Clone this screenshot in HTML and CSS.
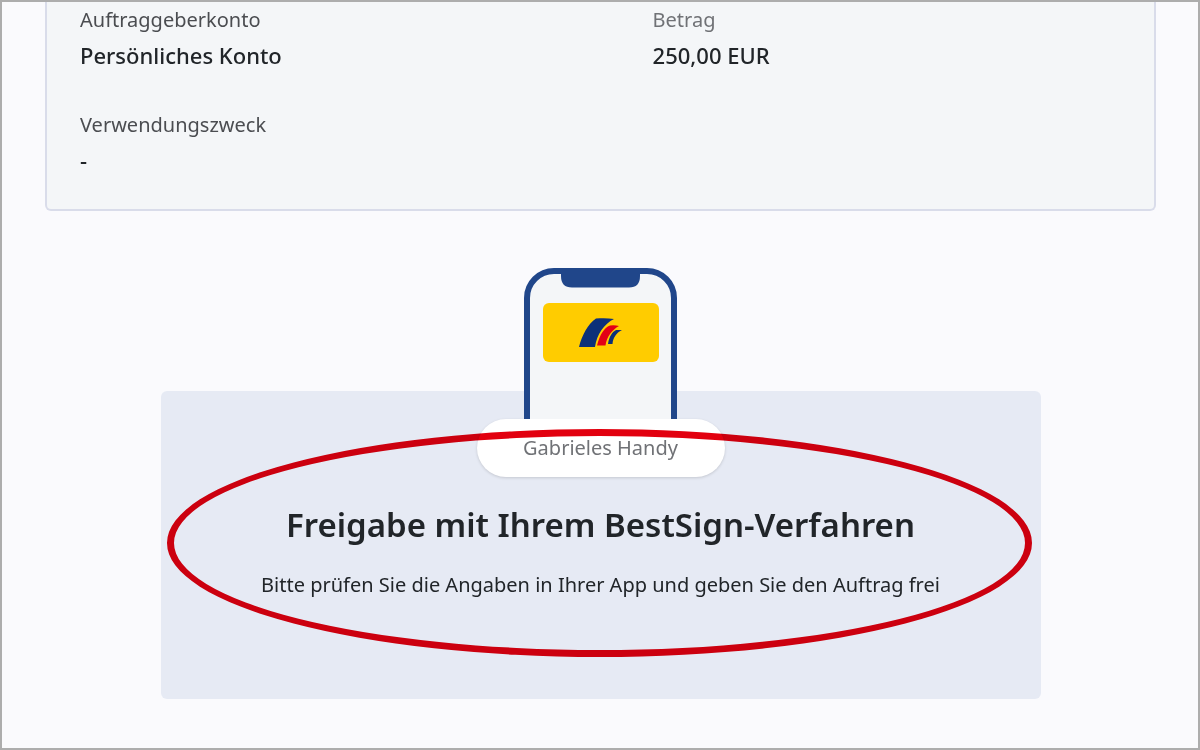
FILE: index.html
```
<!DOCTYPE html>
<html lang="de">
<head>
  <meta charset="UTF-8">
  <meta name="viewport" content="width=device-width, initial-scale=1.0">
  <title>Auftrag freigeben</title>
  <link rel="stylesheet" href="styles.css">
</head>
<body>
  <main class="page">
    <dl class="summary">
      <div class="field">
        <dt>Auftraggeberkonto</dt>
        <dd>Persönliches Konto</dd>
      </div>
      <div class="field">
        <dt class="light">Betrag</dt>
        <dd>250,00 EUR</dd>
      </div>
      <div class="field">
        <dt>Verwendungszweck</dt>
        <dd>-</dd>
      </div>
    </dl>

    <section class="approval">
      <svg class="phone" width="153" height="151" viewBox="0 0 153 151" aria-hidden="true">
        <path d="M3 151V30A27 27 0 0 1 30 3H123A27 27 0 0 1 150 30V151" fill="#f4f6f8" stroke="#20468a" stroke-width="6"/>
        <path d="M37 3H116V8Q116 19.5 105 19.5H48Q37 19.5 37 8Z" fill="#20468a"/>
        <rect x="19" y="35" width="116" height="59" rx="6" fill="#fc0"/>
        <path d="M55 79C58 67 64 56 72 50.500C78 50 84 50 90 51C80 56 73 66 71 79Z" fill="#0c3079"/>
        <path d="M73 77.500C76 66 80 60 86 57.500Q91 57 95 58C88 62 83 68 81.500 77.500Z" fill="#e30016"/>
        <path d="M84 76C85 69 88 64 92 62H98C92 65 89 70 88.500 76Z" fill="#0c3079"/>
      </svg>
      <div class="panel">
        <div class="device">Gabrieles Handy</div>
        <h1>Freigabe mit Ihrem BestSign-Verfahren</h1>
        <p>Bitte prüfen Sie die Angaben in Ihrer App und geben Sie den Auftrag frei</p>
        <div class="marker"></div>
      </div>
    </section>
  </main>
</body>
</html>
```

FILE: styles.css
```
* {
  box-sizing: border-box;
}
body {
  margin: 0;
  font-family: "Noto Sans", "Open Sans", sans-serif;
  background: #fafafd;
  color: #212529;
}
.page {
  min-height: 100vh;
  padding: 0 42px 49px 43px;
  border: 2px solid #adadad;
}
.summary {
  display: grid;
  grid-template-columns: 11fr 9fr;
  row-gap: 35px;
  margin: 0;
  padding: 2px 33px 30px;
  background: #f4f6f8;
  border: 2px solid #d9dcea;
  border-top: 0;
  border-radius: 0 0 6px 6px;
}
.field dt {
  font-size: 20px;
  line-height: 32px;
  color: #4b4d51;
}
.field dt.light {
  color: #707276;
}
.field dd {
  margin: 0;
  font-size: 22px;
  font-weight: 500;
  line-height: 38px;
}
.approval {
  display: flex;
  flex-direction: column;
  align-items: center;
  margin-top: 57px;
}
.phone {
  position: relative;
  z-index: 1;
  display: block;
  margin-bottom: -28px;
}
.panel {
  position: relative;
  display: flex;
  flex-direction: column;
  align-items: center;
  width: 100%;
  max-width: 880px;
  padding: 28px 20px 98px;
  background: #e6eaf4;
  border-radius: 6px;
  text-align: center;
}
.device {
  min-width: 248px;
  padding: 0 40px;
  background: #fff;
  border-radius: 30px;
  box-shadow: 0 1px 3px rgba(0, 0, 0, 0.15);
  font-size: 20px;
  line-height: 58px;
  color: #707276;
}
.panel h1 {
  margin: 24px 0 20px;
  font-size: 33px;
  font-weight: 600;
  line-height: 48px;
}
.panel p {
  margin: 0;
  font-size: 20px;
  line-height: 32px;
}
.marker {
  position: absolute;
  top: 38px;
  right: 9px;
  bottom: 42px;
  left: 6px;
  border: 7px solid #e2000f;
  border-radius: 50%;
  mix-blend-mode: multiply;
  pointer-events: none;
}
```
